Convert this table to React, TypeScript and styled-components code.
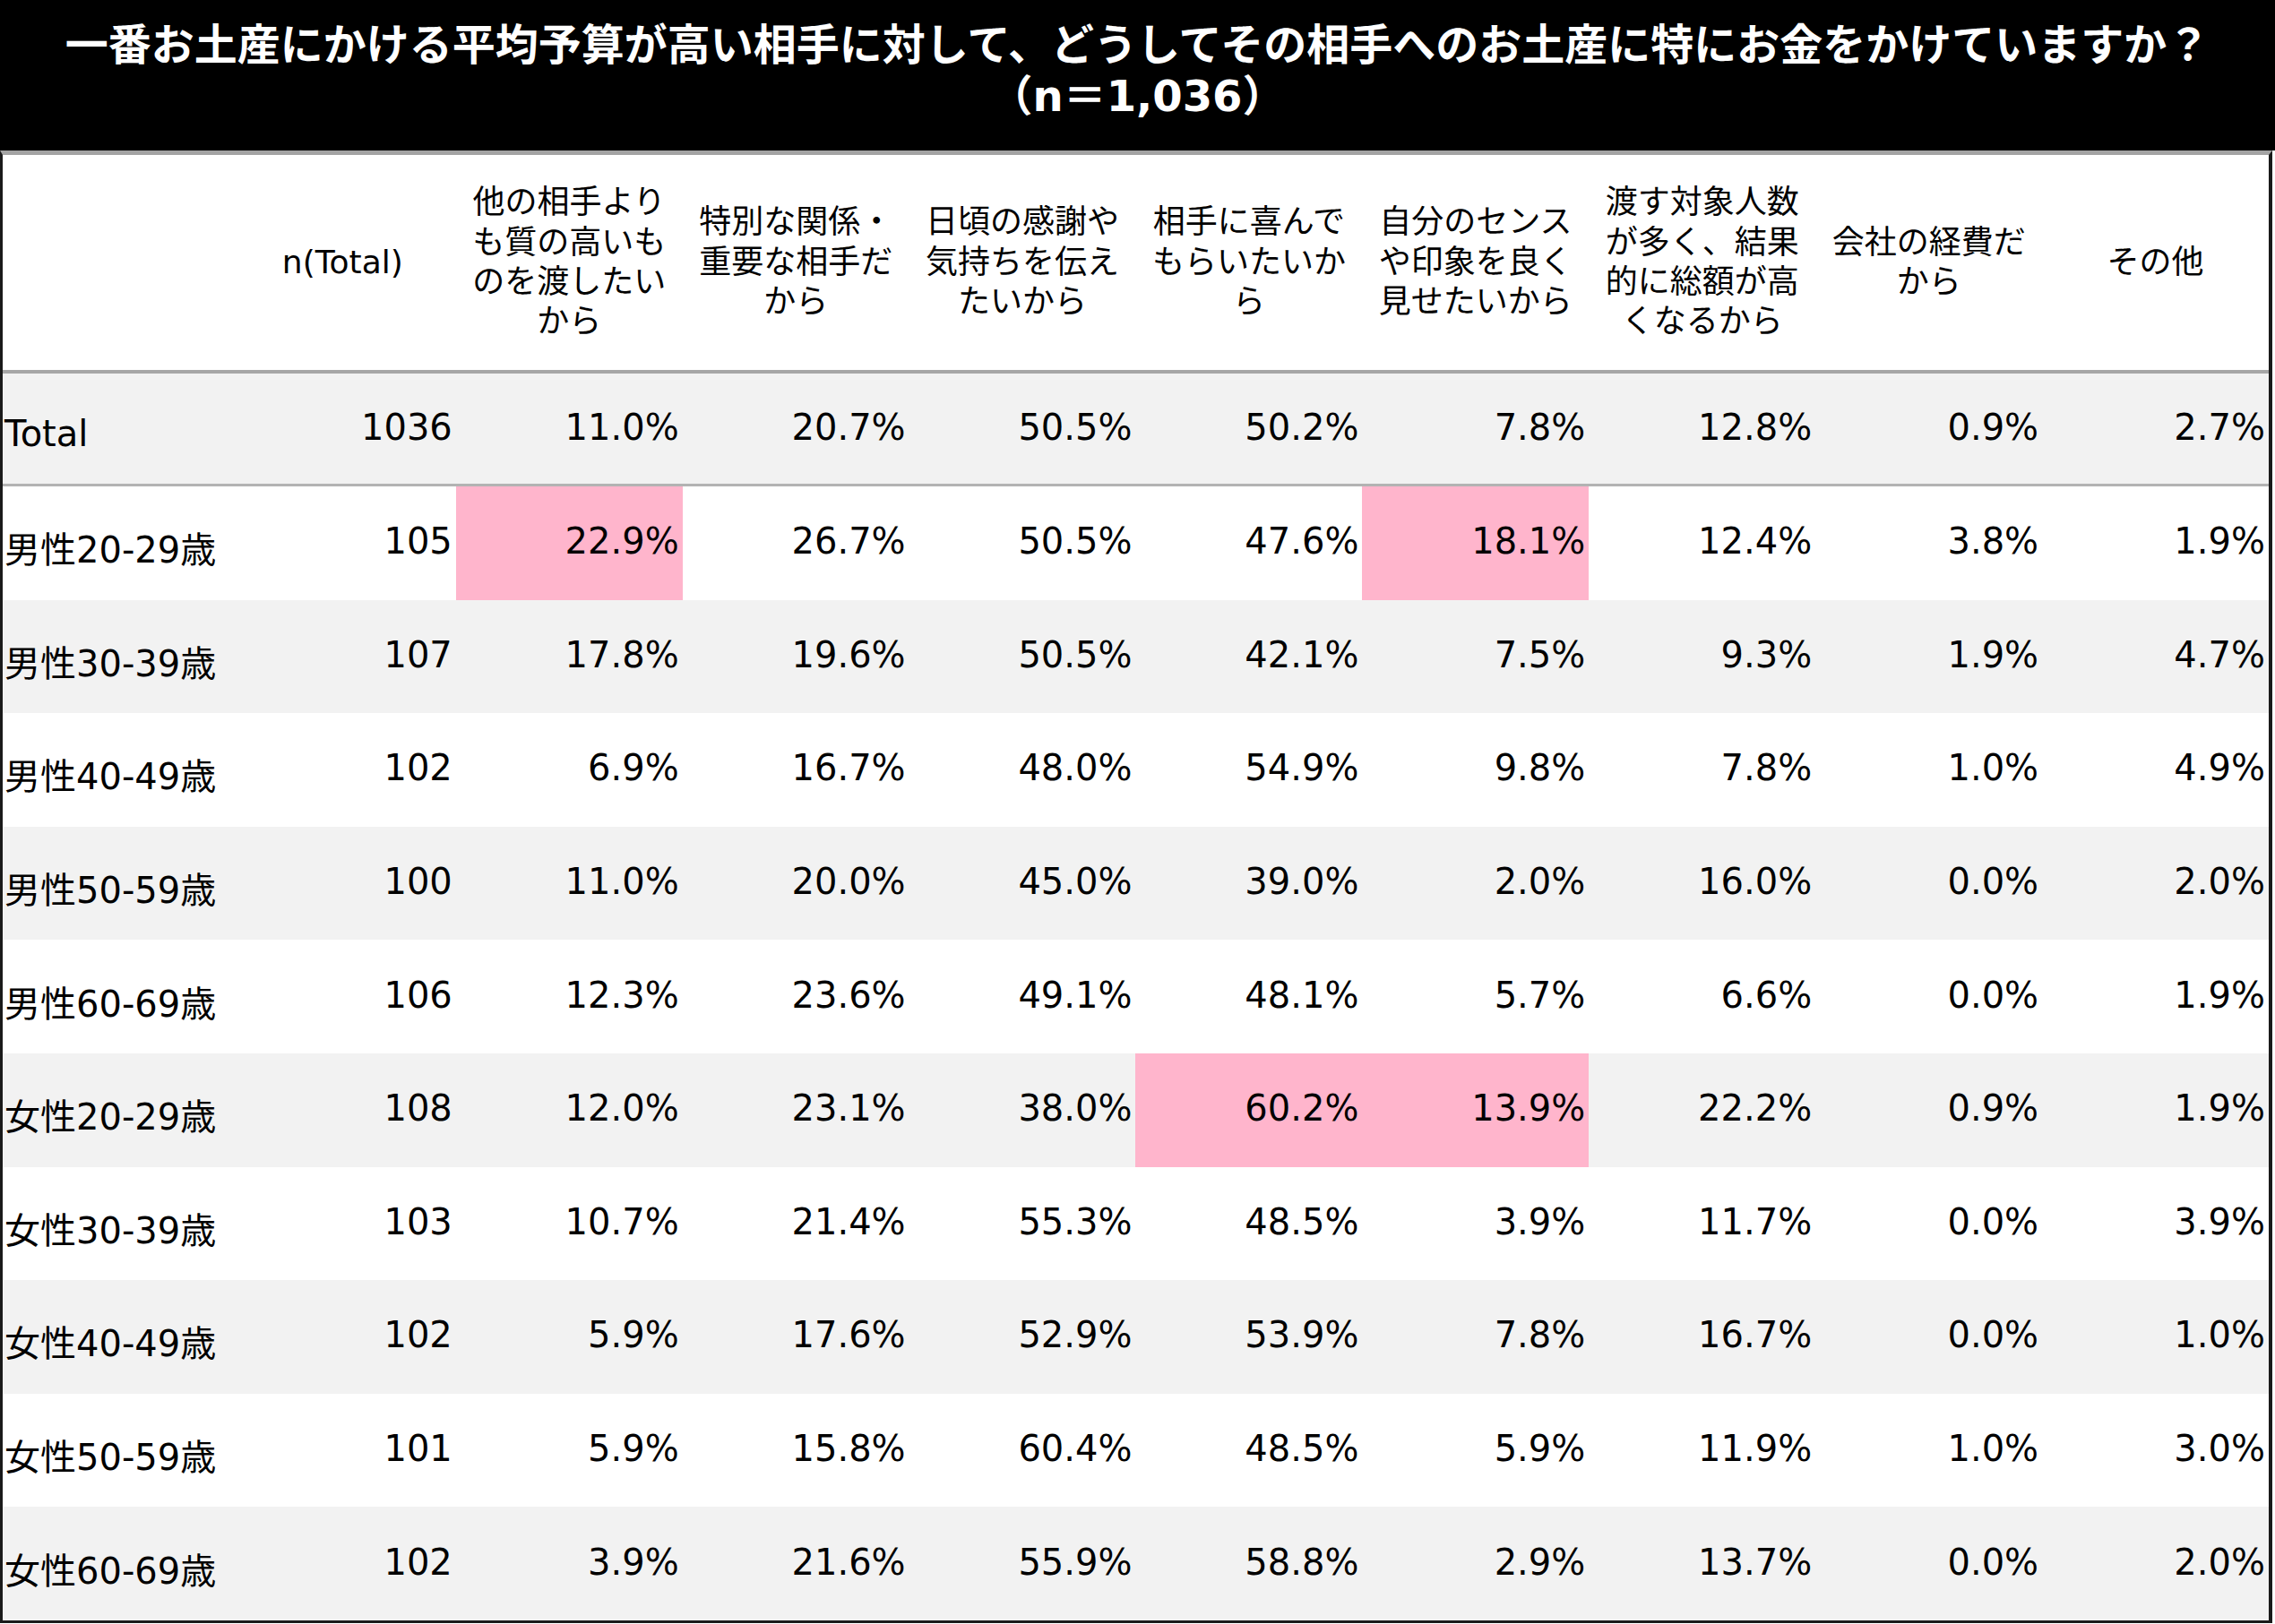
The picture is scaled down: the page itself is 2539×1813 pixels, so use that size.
import styled, { createGlobalStyle } from "styled-components";

const GlobalStyle = createGlobalStyle`
  html, body {
    margin: 0;
    padding: 0;
    background: #fff;
  }
  body {
    font-family: "DejaVu Sans", "Noto Sans CJK JP", sans-serif;
    color: #000;
  }
`;

const Page = styled.div`
  width: 2539px;
`;

const TitleBar = styled.header`
  background: #000;
  color: #fff;
  height: 168px;
  box-sizing: border-box;
  padding-top: 22px;
  text-align: center;
  font-family: "DejaVu Sans", "Noto Sans CJK JP", sans-serif;
  font-weight: 700;
  font-size: 48px;
  line-height: 57px;
`;

const TitleLine = styled.div`
  white-space: nowrap;
`;

const Table = styled.div`
  width: 2536px;
  box-sizing: border-box;
  border-top: 5px solid #a3a3a3;
  border-left: 3px solid #1a1a1a;
  border-right: 4px solid #1a1a1a;
  border-bottom: 3px solid #1a1a1a;
`;

const HeaderRow = styled.div`
  display: grid;
  grid-template-columns: repeat(10, 1fr);
  height: 244px;
  box-sizing: border-box;
  border-bottom: 4px solid #a6a6a6;
  background: #fff;
`;

const HeadCell = styled.div`
  display: flex;
  align-items: center;
  justify-content: center;
  text-align: center;
  font-size: 36px;
  line-height: 44.4px;
  white-space: nowrap;
`;

const Row = styled.div<{ $shaded?: boolean; $total?: boolean }>`
  display: grid;
  grid-template-columns: repeat(10, 1fr);
  height: ${(p) => (p.$total ? "126px" : "126.6px")};
  box-sizing: border-box;
  background: ${(p) => (p.$shaded ? "#f2f2f2" : "#fff")};
  border-bottom: ${(p) => (p.$total ? "3px solid #b3b3b3" : "none")};
  font-size: 40px;
`;

const LabelCell = styled.div`
  display: flex;
  align-items: center;
  padding: 10px 0 0 2px;
  white-space: nowrap;
`;

const NumCell = styled.div<{ $hl?: boolean }>`
  display: flex;
  align-items: center;
  justify-content: flex-end;
  padding: 0 4px 4px 0;
  background: ${(p) => (p.$hl ? "#ffb5cc" : "transparent")};
  white-space: nowrap;
`;

const headers: string[][] = [
  ["n(Total)"],
  ["他の相手より", "も質の高いも", "のを渡したい", "から"],
  ["特別な関係・", "重要な相手だ", "から"],
  ["日頃の感謝や", "気持ちを伝え", "たいから"],
  ["相手に喜んで", "もらいたいか", "ら"],
  ["自分のセンス", "や印象を良く", "見せたいから"],
  ["渡す対象人数", "が多く、結果", "的に総額が高", "くなるから"],
  ["会社の経費だ", "から"],
  ["その他"],
];

type DataRow = { label: string; n: number; values: string[]; hl?: number[] };

const rows: DataRow[] = [
  { label: "Total", n: 1036, values: ["11.0%", "20.7%", "50.5%", "50.2%", "7.8%", "12.8%", "0.9%", "2.7%"] },
  { label: "男性20-29歳", n: 105, values: ["22.9%", "26.7%", "50.5%", "47.6%", "18.1%", "12.4%", "3.8%", "1.9%"], hl: [0, 4] },
  { label: "男性30-39歳", n: 107, values: ["17.8%", "19.6%", "50.5%", "42.1%", "7.5%", "9.3%", "1.9%", "4.7%"] },
  { label: "男性40-49歳", n: 102, values: ["6.9%", "16.7%", "48.0%", "54.9%", "9.8%", "7.8%", "1.0%", "4.9%"] },
  { label: "男性50-59歳", n: 100, values: ["11.0%", "20.0%", "45.0%", "39.0%", "2.0%", "16.0%", "0.0%", "2.0%"] },
  { label: "男性60-69歳", n: 106, values: ["12.3%", "23.6%", "49.1%", "48.1%", "5.7%", "6.6%", "0.0%", "1.9%"] },
  { label: "女性20-29歳", n: 108, values: ["12.0%", "23.1%", "38.0%", "60.2%", "13.9%", "22.2%", "0.9%", "1.9%"], hl: [3, 4] },
  { label: "女性30-39歳", n: 103, values: ["10.7%", "21.4%", "55.3%", "48.5%", "3.9%", "11.7%", "0.0%", "3.9%"] },
  { label: "女性40-49歳", n: 102, values: ["5.9%", "17.6%", "52.9%", "53.9%", "7.8%", "16.7%", "0.0%", "1.0%"] },
  { label: "女性50-59歳", n: 101, values: ["5.9%", "15.8%", "60.4%", "48.5%", "5.9%", "11.9%", "1.0%", "3.0%"] },
  { label: "女性60-69歳", n: 102, values: ["3.9%", "21.6%", "55.9%", "58.8%", "2.9%", "13.7%", "0.0%", "2.0%"] },
];

const App = () => {
  return (
    <Page>
      <GlobalStyle />
      <TitleBar>
        <TitleLine>
          一番お土産にかける平均予算が高い相手に対して、どうしてその相手へのお土産に特にお金をかけていますか？
        </TitleLine>
        <TitleLine>（n＝1,036）</TitleLine>
      </TitleBar>
      <Table>
        <HeaderRow>
          <HeadCell />
          {headers.map((lines, i) => (
            <HeadCell key={i}>
              <div>
                {lines.map((l, j) => (
                  <div key={j}>{l}</div>
                ))}
              </div>
            </HeadCell>
          ))}
        </HeaderRow>
        {rows.map((r, i) => (
          <Row key={r.label} $total={i === 0} $shaded={i === 0 || i % 2 === 0}>
            <LabelCell>{r.label}</LabelCell>
            <NumCell>{r.n}</NumCell>
            {r.values.map((v, j) => (
              <NumCell key={j} $hl={r.hl?.includes(j)}>
                {v}
              </NumCell>
            ))}
          </Row>
        ))}
      </Table>
    </Page>
  );
};

export default App;
